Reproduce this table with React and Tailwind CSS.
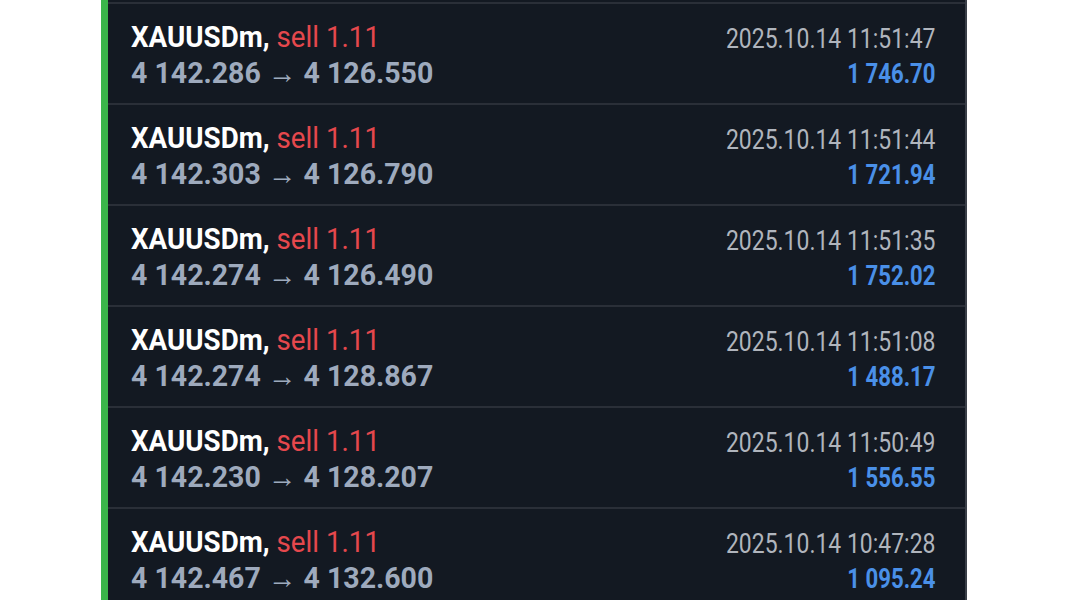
const deals = [
  { open: "4 142.286", close: "4 126.550", time: "2025.10.14 11:51:47", profit: "1 746.70" },
  { open: "4 142.303", close: "4 126.790", time: "2025.10.14 11:51:44", profit: "1 721.94" },
  { open: "4 142.274", close: "4 126.490", time: "2025.10.14 11:51:35", profit: "1 752.02" },
  { open: "4 142.274", close: "4 128.867", time: "2025.10.14 11:51:08", profit: "1 488.17" },
  { open: "4 142.230", close: "4 128.207", time: "2025.10.14 11:50:49", profit: "1 556.55" },
  { open: "4 142.467", close: "4 132.600", time: "2025.10.14 10:47:28", profit: "1 095.24" },
];

const DealRow = ({ deal }) => (
  <div className="flex justify-between h-[101px] pl-[23px] pr-[30px] border-t-2 border-[#2a2f38]">
    <div className="pt-[15px] flex flex-col items-start">
      <div className="h-[36px] leading-[36px] text-[30px] font-bold text-white scale-x-[0.925] origin-left whitespace-nowrap">
        XAUUSDm, <span className="font-normal text-[#e5484d]">sell 1.11</span>
      </div>
      <div className="h-[36px] leading-[36px] text-[30px] font-bold text-[#9eaabd] scale-x-[0.95] origin-left whitespace-nowrap">
        {deal.open} <span className="font-normal">→</span> {deal.close}
      </div>
    </div>
    <div className="pt-[18px] flex flex-col items-end">
      <div className="h-[35px] leading-[35px] text-[27px] text-[#b0b5bd] scale-x-[0.85] origin-right whitespace-nowrap">
        {deal.time}
      </div>
      <div className="h-[35px] leading-[35px] text-[27px] font-bold text-[#4a90e8] scale-x-[0.82] origin-right whitespace-nowrap">
        {deal.profit}
      </div>
    </div>
  </div>
);

const App = () => {
  return (
    <div className="w-[1066px] h-[600px] overflow-hidden bg-white" style={{ fontFamily: "Roboto, sans-serif" }}>
      <div className="ml-[101px] w-[866px] h-full flex bg-[#131922] border-r-2 border-[#3a3f48]">
        <div className="w-[7px] bg-[#3ab54a]"></div>
        <div className="flex-1 pt-[2px]">
          {deals.map((deal, i) => (
            <DealRow key={i} deal={deal} />
          ))}
        </div>
      </div>
    </div>
  );
};

export default App;
